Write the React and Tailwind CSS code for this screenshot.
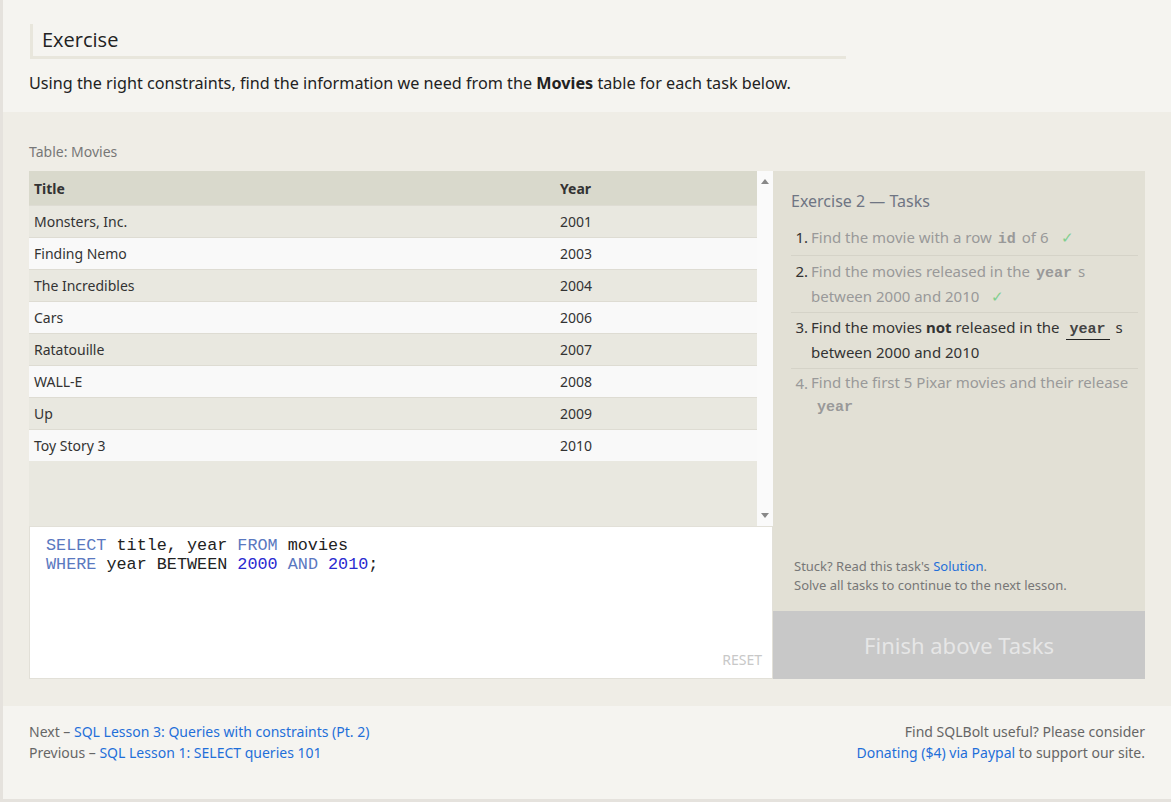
import React from 'react';

const movies = [
  ['Monsters, Inc.', 2001],
  ['Finding Nemo', 2003],
  ['The Incredibles', 2004],
  ['Cars', 2006],
  ['Ratatouille', 2007],
  ['WALL-E', 2008],
  ['Up', 2009],
  ['Toy Story 3', 2010],
];

const sans = { fontFamily: '"Noto Sans", "Open Sans", sans-serif' };

const Code = ({ children, dark, underline }) => (
  <code
    className={`mx-[6px] inline-block font-bold text-[15px] leading-[18px] ${dark ? 'text-[#444]' : 'text-[#999]'} ${underline ? 'border-b border-[#222] px-[4px]' : ''}`}
    style={{ fontFamily: '"Liberation Mono", monospace' }}
  >
    {children}
  </code>
);

const Check = () => <span className="ml-[12px] text-[#7fcf8f]">✓</span>;

const MoviesTable = () => (
  <div className="flex h-[355px] bg-[#e9e8e0]">
    <div className="flex-1">
      <div className="flex h-[34px] items-center bg-[#d9d9cc] text-[14px] font-bold text-[#333]">
        <div className="w-[531px] pl-[5px]">Title</div>
        <div>Year</div>
      </div>
      {movies.map(([title, year], i) => (
        <div
          key={title}
          className={`flex h-[32px] items-center border-t border-[#dedcd3] text-[14px] text-[#333] ${i % 2 ? 'bg-[#f9f9f9]' : 'bg-[#e9e8e0]'}`}
        >
          <div className="w-[531px] pl-[5px]">{title}</div>
          <div>{year}</div>
        </div>
      ))}
    </div>
    {/* scrollbar */}
    <div className="flex w-[16px] flex-col items-center justify-between bg-[#fafafa] py-[8px]">
      <svg width="8" height="5" viewBox="0 0 8 5"><path d="M0 5 L4 0 L8 5 Z" fill="#888" /></svg>
      <svg width="8" height="5" viewBox="0 0 8 5"><path d="M0 0 L8 0 L4 5 Z" fill="#888" /></svg>
    </div>
  </div>
);

const Editor = () => (
  <div className="relative h-[153px] border border-[#e2e0d8] bg-white px-[16px] pt-[9px]">
    <pre className="text-[16.8px] leading-[19px] text-[#222]" style={{ fontFamily: '"Liberation Mono", monospace' }}>
      <span className="text-[#5a78c0]">SELECT</span> title, year <span className="text-[#5a78c0]">FROM</span> movies{'\n'}
      <span className="text-[#5a78c0]">WHERE</span> year BETWEEN <span className="text-[#2a2ad0]">2000</span> <span className="text-[#5a78c0]">AND</span> <span className="text-[#2a2ad0]">2010</span>;
    </pre>
    <div className="absolute bottom-[8px] right-[10px] text-[14px] text-[#c8c8c8]">RESET</div>
  </div>
);

const Tasks = () => (
  <div className="flex w-[372px] flex-col">
    <div className="flex h-[440px] flex-col justify-between bg-[#e2e0d5] pl-[18px] pr-[7px] pt-[18px] pb-[16px]">
      <div>
        <div className="mb-[12px] text-[16px] leading-[24px] text-[#6f7583]">Exercise 2 — Tasks</div>
        <ol className="text-[15px] leading-[25px]">
          <li className="flex border-b border-[#d5d3c8] pb-[5px]">
            <span className="w-[17px] shrink-0 text-right text-[#333]">1.</span>
            <span className="pl-[3px] text-[#999]">Find the movie with a row<Code>id</Code>of 6<Check /></span>
          </li>
          <li className="flex border-b border-[#d5d3c8] py-[3px]">
            <span className="w-[17px] shrink-0 text-right text-[#333]">2.</span>
            <span className="pl-[3px] text-[#999]">Find the movies released in the<Code>year</Code>s<br />between 2000 and 2010<Check /></span>
          </li>
          <li className="flex border-b border-[#d5d3c8] pt-[2px] pb-[3px]">
            <span className="w-[17px] shrink-0 text-right text-[#333]">3.</span>
            <span className="pl-[3px] text-[#333]">Find the movies <b>not</b> released in the<Code dark underline>year</Code>s<br />between 2000 and 2010</span>
          </li>
          <li className="flex pt-[2px]">
            <span className="w-[17px] shrink-0 text-right text-[#999]">4.</span>
            <span className="pl-[3px] leading-[23px] text-[#999]">Find the first 5 Pixar movies and their release<br /><Code>year</Code></span>
          </li>
        </ol>
      </div>
      <div className="pl-[3px] text-[13px] leading-[19px] text-[#777]">
        <div>Stuck? Read this task's <span className="text-[#1f6fd9]">Solution</span>.</div>
        <div>Solve all tasks to continue to the next lesson.</div>
      </div>
    </div>
    <div className="flex h-[68px] items-center justify-center bg-[#c8c8c8] text-[22px] text-[#e6e6e6]">
      Finish above Tasks
    </div>
  </div>
);

export default function App() {
  return (
    <div className="min-h-[802px] border-b-[3px] border-l-[3px] border-[#e5e2dd] bg-[#f5f4f0]" style={sans}>
      <div className="px-[26px] pt-[24px] pb-[17px]">
        <div className="ml-[1px] w-[816px] border-b-[3px] border-l-[3px] border-[#e8e6dc] pb-[2px] pl-[9px] pt-[2px]">
          <h1 className="text-[20px] leading-[28px] text-[#222]" style={{ fontFamily: '"Open Sans", sans-serif' }}>Exercise</h1>
        </div>
        <p className="mt-[12px] text-[16.2px] leading-[24px] text-[#222]">
          Using the right constraints, find the information we need from the <b>Movies</b> table for each task below.
        </p>
      </div>

      <div className="bg-[#efede6] px-[26px] pt-[31px] pb-[27px]">
        <div className="mb-[10px] text-[14px] leading-[18px] text-[#777]">Table: Movies</div>
        <div className="flex">
          <div className="w-[744px]">
            <MoviesTable />
            <Editor />
          </div>
          <Tasks />
        </div>
      </div>

      <div className="flex justify-between px-[26px] pt-[15px] text-[14px] leading-[21px] text-[#666]">
        <div>
          <div>Next – <span className="text-[#1f6fd9]">SQL Lesson 3: Queries with constraints (Pt. 2)</span></div>
          <div>Previous – <span className="text-[#1f6fd9]">SQL Lesson 1: SELECT queries 101</span></div>
        </div>
        <div className="text-right">
          <div>Find SQLBolt useful? Please consider</div>
          <div><span className="text-[#1f6fd9]">Donating ($4) via Paypal</span> to support our site.</div>
        </div>
      </div>
    </div>
  );
}
